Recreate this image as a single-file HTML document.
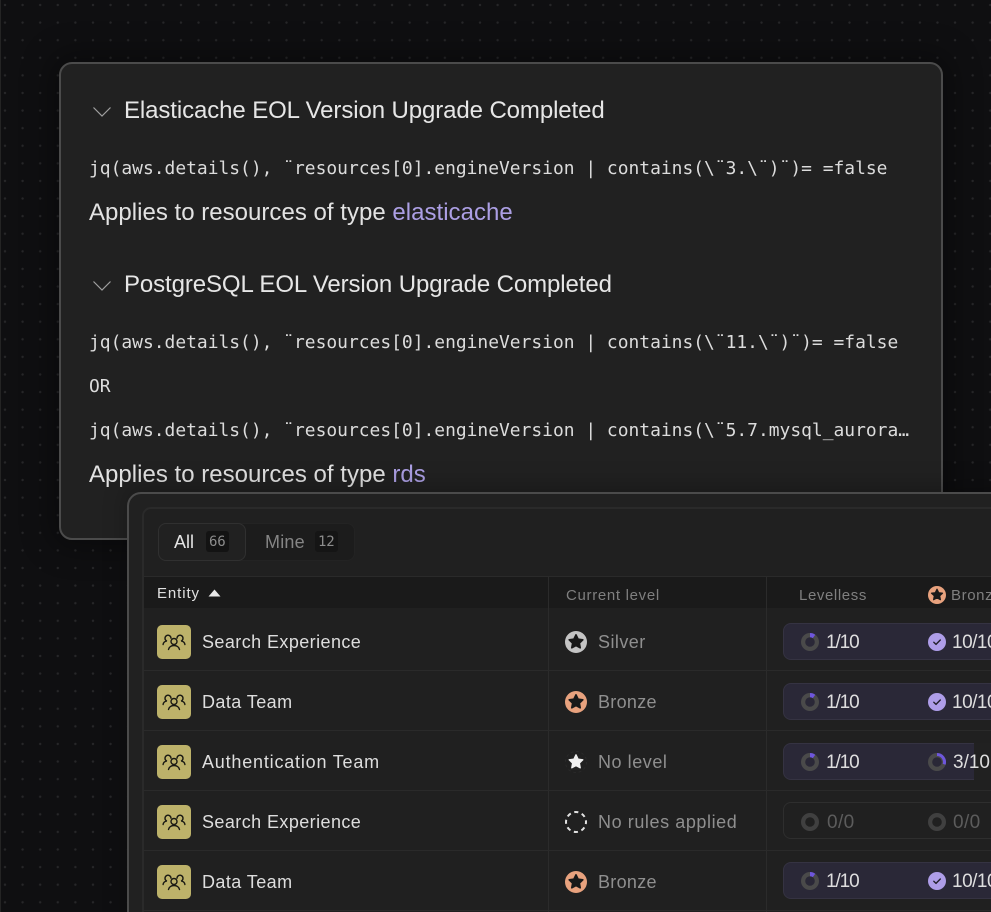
<!DOCTYPE html>
<html lang="en">
<head>
<meta charset="utf-8">
<title>Scorecard rules</title>
<style>
html,body{margin:0;padding:0;background:#0f0f11}
#p{position:relative;width:991px;height:912px;overflow:hidden;background-color:#0f0f11;background-image:radial-gradient(circle at center,#272729 0,#272729 1px,transparent 1.4px);background-size:17.6px 17.6px;background-position:-3.8px -3.8px;font-family:"Liberation Sans",sans-serif}
#p div,#p span.a,#p svg.a{position:absolute}
.t{position:absolute;white-space:nowrap;line-height:1}
.h{font-size:24px;letter-spacing:-.1px;color:#e6e6e6}
.m{font-family:"DejaVu Sans Mono","Liberation Mono",monospace;font-size:17.93px;color:#dcdcdc}
.ap{font-size:24px;letter-spacing:.02px;color:#e2e2e2}
.ap b{font-weight:400;color:#ac9fe4}
.e{font-size:18px;letter-spacing:.42px;color:#dedede;left:202px}
.l{font-size:18px;letter-spacing:.45px;color:#8f8f8f;left:598px}
.v{font-size:19px;letter-spacing:-1.1px;color:#dedede}
.v.w{letter-spacing:-.5px}
.v.n{letter-spacing:0}
.v.o{letter-spacing:.4px;color:#5c5c5c}
.c{font-size:15px;letter-spacing:.6px;color:#7f7f7f}
.pill{left:783px;width:260px;height:35px;background:#2a2837;border:1px solid #353342;border-radius:8px}
.rl{left:143px;width:848px;height:1px;background:#2a2a2a}
</style>
</head>
<body>
<div id="p">
<svg width="0" height="0" style="position:absolute">
<defs>
<path id="star" d="M12 4.200L14.260 8.890 19.420 9.600 15.650 13.190 16.580 18.310 12 15.840 7.420 18.310 8.350 13.190 4.580 9.600 9.740 8.890Z"/>
<g id="team" fill="none" stroke="#1a1a14" stroke-width="1.400" stroke-linecap="round">
<circle cx="17" cy="16.500" r="3"/>
<path d="M11.500 24.500c.5-2.600 2.800-4 5.500-4s5 1.400 5.500 4"/>
<path d="M14 13.200a3 3 0 1 0-4.500 2.600M9.300 16.200c-1.800.3-2.900 1.400-3.200 3.300"/>
<path d="M20 13.200a3 3 0 1 1 4.500 2.600M24.700 16.200c1.800.3 2.900 1.400 3.200 3.300"/>
</g>
<g id="prog"><circle cx="9" cy="9" r="6.900" fill="none" stroke="#4a4a4a" stroke-width="4.200"/><path d="M9 2.100A6.900 6.900 0 0 1 13.050 3.420" fill="none" stroke="#6e56dc" stroke-width="4.200"/></g>
<g id="prog3"><circle cx="9" cy="9" r="6.900" fill="none" stroke="#4a4a4a" stroke-width="4.200"/><path d="M9 1.500A7.500 7.500 0 0 1 16.130 11.320" fill="none" stroke="#6e56dc" stroke-width="3"/></g>
<g id="zero"><circle cx="9" cy="9" r="6.900" fill="none" stroke="#404040" stroke-width="4.200"/></g>
<g id="ok"><circle cx="9" cy="9" r="9" fill="#ae9de8"/><path d="M5.800 9.300l2.200 2.100 4.300-4.400" fill="none" stroke="#23212c" stroke-width="1.400" stroke-linecap="round" stroke-linejoin="round"/></g>
</defs>
</svg>

<div style="left:0;top:0;width:1px;height:912px;background:#242424"></div>

<!-- back card -->
<div style="left:59px;top:62px;width:880px;height:474px;background:#212121;border:2px solid #4b4b4b;border-radius:13px;box-shadow:0 0 30px 8px rgba(0,0,0,.35)"></div>

<svg class="a" style="left:92px;top:105px" width="20" height="14" viewBox="0 0 20 14"><path d="M1.500 2.500L10 11 18.500 2.500" fill="none" stroke="#a0a0a0" stroke-width="1.200"/></svg>
<span class="t h" style="left:124px;top:99px">Elasticache EOL Version Upgrade Completed</span>
<span class="t m" style="left:89px;top:160px">jq(aws.details(), ¨resources[0].engineVersion | contains(\¨3.\¨)¨)= =false</span>
<span class="t ap" style="left:89px;top:201px">Applies to resources of type <b>elasticache</b></span>

<svg class="a" style="left:92px;top:279px" width="20" height="14" viewBox="0 0 20 14"><path d="M1.500 2.500L10 11 18.500 2.500" fill="none" stroke="#a0a0a0" stroke-width="1.200"/></svg>
<span class="t h" style="left:124px;top:273px">PostgreSQL EOL Version Upgrade Completed</span>
<span class="t m" style="left:89px;top:334px">jq(aws.details(), ¨resources[0].engineVersion | contains(\¨11.\¨)¨)= =false</span>
<span class="t m" style="left:89px;top:378px">OR</span>
<span class="t m" style="left:89px;top:422px">jq(aws.details(), ¨resources[0].engineVersion | contains(\¨5.7.mysql_aurora…</span>
<span class="t ap" style="left:89px;top:463px">Applies to resources of type <b>rds</b></span>

<!-- front card -->
<div style="left:127px;top:492px;width:900px;height:460px;background:#212121;border:2px solid #4b4b4b;border-radius:14px;box-shadow:0 -6px 24px rgba(0,0,0,.25)"></div>
<div style="left:142px;top:507px;width:900px;height:440px;background:#202020;border:2px solid #2a2a2a;border-radius:9px"></div>

<!-- tabs -->
<div style="left:158px;top:523px;width:195px;height:36px;background:#1c1c1c;border:1px solid #232323;border-radius:8px"></div>
<div style="left:158px;top:523px;width:86px;height:36px;background:#212121;border:1px solid #303030;border-radius:8px"></div>
<span class="t" style="left:174px;top:533px;font-size:18px;color:#e4e4e4">All</span>
<div style="left:206px;top:531px;width:23px;height:21px;background:#131313;border-radius:3px"></div>
<span class="t" style="left:209px;top:535px;font-family:'DejaVu Sans Mono',monospace;font-size:14px;letter-spacing:-.2px;color:#8c8c8c">66</span>
<span class="t" style="left:265px;top:533px;font-size:18px;letter-spacing:.2px;color:#858585">Mine</span>
<div style="left:315px;top:531px;width:23px;height:21px;background:#151515;border-radius:3px"></div>
<span class="t" style="left:318px;top:535px;font-family:'DejaVu Sans Mono',monospace;font-size:14px;letter-spacing:-.2px;color:#8c8c8c">12</span>

<!-- header -->
<div style="left:144px;top:577px;width:847px;height:31px;background:#1a1a1a"></div>
<div class="rl" style="top:576px"></div>
<span class="t" style="left:157px;top:586px;font-size:15px;letter-spacing:.9px;color:#e0e0e0">Entity</span>
<svg class="a" style="left:208px;top:589px" width="13" height="8" viewBox="0 0 13 8"><path d="M6.500 0.500L12.500 7.500H0.500Z" fill="#e8e8e8"/></svg>
<span class="t c" style="left:566px;top:588px;letter-spacing:.68px">Current level</span>
<span class="t c" style="left:799px;top:588px">Levelless</span>
<svg class="a" style="left:928px;top:586px" width="18" height="18" viewBox="0 0 24 24"><circle cx="12" cy="12" r="12" fill="#e8a27e"/><use href="#star" fill="#1a1a1a" stroke="#1a1a1a" stroke-width="1.500" stroke-linejoin="round"/></svg>
<span class="t c" style="left:951px;top:588px">Bronze</span>

<div style="left:548px;top:577px;width:1px;height:335px;background:#2b2b2b"></div>
<div style="left:766px;top:577px;width:1px;height:335px;background:#2b2b2b"></div>
<div class="rl" style="top:670px"></div>
<div class="rl" style="top:730px"></div>
<div class="rl" style="top:790px"></div>
<div class="rl" style="top:850px"></div>
<div class="rl" style="top:910px"></div>

<!-- entity icons -->
<svg class="a" style="left:157px;top:625px" width="34" height="34" viewBox="0 0 34 34"><rect width="34" height="34" rx="5" fill="#bdb26a"/><use href="#team"/></svg>
<svg class="a" style="left:157px;top:685px" width="34" height="34" viewBox="0 0 34 34"><rect width="34" height="34" rx="5" fill="#bdb26a"/><use href="#team"/></svg>
<svg class="a" style="left:157px;top:745px" width="34" height="34" viewBox="0 0 34 34"><rect width="34" height="34" rx="5" fill="#bdb26a"/><use href="#team"/></svg>
<svg class="a" style="left:157px;top:805px" width="34" height="34" viewBox="0 0 34 34"><rect width="34" height="34" rx="5" fill="#bdb26a"/><use href="#team"/></svg>
<svg class="a" style="left:157px;top:865px" width="34" height="34" viewBox="0 0 34 34"><rect width="34" height="34" rx="5" fill="#bdb26a"/><use href="#team"/></svg>

<span class="t e" style="top:633px">Search Experience</span>
<span class="t e" style="top:693px">Data Team</span>
<span class="t e" style="top:753px;letter-spacing:.8px">Authentication Team</span>
<span class="t e" style="top:813px">Search Experience</span>
<span class="t e" style="top:873px">Data Team</span>

<!-- level icons -->
<svg class="a" style="left:565px;top:631px" width="22" height="22" viewBox="0 0 24 24"><circle cx="12" cy="12" r="12" fill="#c4c4c4"/><use href="#star" fill="#191919" stroke="#191919" stroke-width="1.800" stroke-linejoin="round"/></svg>
<svg class="a" style="left:565px;top:691px" width="22" height="22" viewBox="0 0 24 24"><circle cx="12" cy="12" r="12" fill="#e8a27e"/><use href="#star" fill="#191919" stroke="#191919" stroke-width="1.800" stroke-linejoin="round"/></svg>
<svg class="a" style="left:565px;top:751px" width="22" height="22" viewBox="0 0 24 24"><circle cx="12" cy="12" r="11.500" fill="none" stroke="#2a2a2a" stroke-dasharray="3 3"/><use href="#star" fill="#efefef" stroke="#efefef" stroke-width="1.500" stroke-linejoin="round"/></svg>
<svg class="a" style="left:565px;top:811px" width="22" height="22" viewBox="0 0 22 22"><circle cx="11" cy="11" r="10" fill="none" stroke="#e2e2e2" stroke-width="2" stroke-dasharray="4.200 3.650" stroke-dashoffset="2.100"/></svg>
<svg class="a" style="left:565px;top:871px" width="22" height="22" viewBox="0 0 24 24"><circle cx="12" cy="12" r="12" fill="#e8a27e"/><use href="#star" fill="#191919" stroke="#191919" stroke-width="1.800" stroke-linejoin="round"/></svg>

<span class="t l" style="top:633px">Silver</span>
<span class="t l" style="top:693px;letter-spacing:.3px">Bronze</span>
<span class="t l" style="top:753px;letter-spacing:.55px">No level</span>
<span class="t l" style="top:813px;letter-spacing:.58px">No rules applied</span>
<span class="t l" style="top:873px;letter-spacing:.3px">Bronze</span>

<!-- pills -->
<div class="pill" style="top:623px"></div>
<svg class="a" style="left:801px;top:633px" width="18" height="18"><use href="#prog"/></svg>
<span class="t v" style="left:826px;top:633px">1/10</span>
<svg class="a" style="left:928px;top:633px" width="18" height="18"><use href="#ok"/></svg>
<span class="t v w" style="left:952px;top:633px">10/10</span>

<div class="pill" style="top:683px"></div>
<svg class="a" style="left:801px;top:693px" width="18" height="18"><use href="#prog"/></svg>
<span class="t v" style="left:826px;top:693px">1/10</span>
<svg class="a" style="left:928px;top:693px" width="18" height="18"><use href="#ok"/></svg>
<span class="t v w" style="left:952px;top:693px">10/10</span>

<div class="pill" style="top:743px"></div>
<div style="left:974px;top:743px;width:17px;height:37px;background:#212121"></div>
<svg class="a" style="left:801px;top:753px" width="18" height="18"><use href="#prog"/></svg>
<span class="t v" style="left:826px;top:753px">1/10</span>
<svg class="a" style="left:928px;top:753px" width="18" height="18"><use href="#prog3"/></svg>
<span class="t v n" style="left:953px;top:753px">3/10</span>

<div class="pill" style="top:802px;background:#202020;border-color:#2e2e2e"></div>
<svg class="a" style="left:801px;top:813px" width="18" height="18"><use href="#zero"/></svg>
<span class="t v o" style="left:827px;top:813px">0/0</span>
<svg class="a" style="left:928px;top:813px" width="18" height="18"><use href="#zero"/></svg>
<span class="t v o" style="left:953px;top:813px">0/0</span>

<div class="pill" style="top:862px"></div>
<svg class="a" style="left:801px;top:872px" width="18" height="18"><use href="#prog"/></svg>
<span class="t v" style="left:826px;top:872px">1/10</span>
<svg class="a" style="left:928px;top:872px" width="18" height="18"><use href="#ok"/></svg>
<span class="t v w" style="left:952px;top:872px">10/10</span>
</div>
</body>
</html>
